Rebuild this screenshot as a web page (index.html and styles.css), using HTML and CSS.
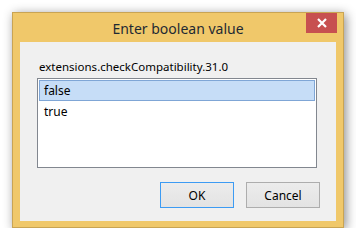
FILE: index.html
```html
<!DOCTYPE html>
<html>
<head>
<meta charset="utf-8">
<link rel="stylesheet" href="styles.css">
</head>
<body>
<div class="window">
  <div class="titlebar">
    <span class="title">Enter boolean value</span>
    <div class="close">
      <svg width="10" height="10" viewBox="0 0 10 10"><path d="M1 1 L9 9 M9 1 L1 9" stroke="#fff" stroke-width="2.2" fill="none"/></svg>
    </div>
  </div>
  <div class="client">
    <div class="label">extensions.checkCompatibility.31.0</div>
    <div class="listbox">
      <div class="item selected">false</div>
      <div class="item">true</div>
    </div>
    <div class="buttons">
      <div class="btn default">OK</div>
      <div class="btn">Cancel</div>
    </div>
  </div>
</div>
</body>
</html>
```

FILE: styles.css
```css
html, body { margin: 0; padding: 0; background: #fff; }
body { font-family: "Noto Sans", "Open Sans", sans-serif; }
.window {
  position: relative;
  margin: 12px 0 0 12px;
  width: 330px;
  height: 214px;
  border: 1px solid #c9a453;
  background: #f0c86a;
  box-shadow: 2px 2px 10px rgba(0,0,0,0.45);
  display: flex;
  flex-direction: column;
}
.titlebar {
  height: 29px;
  display: flex;
  align-items: center;
  justify-content: center;
}
.title {
  font-size: 14px;
  color: #1f2a33;
  margin-top: 1px;
}
.close {
  position: absolute;
  top: 0;
  right: 6px;
  width: 31px;
  height: 20px;
  background: #c75050;
  display: flex;
  align-items: center;
  justify-content: center;
}
.close svg { display: block; }
.client {
  margin: 0 7px 6px 7px;
  flex: 1;
  background: #f0f0f0;
  display: flex;
  flex-direction: column;
  font-size: 12px;
  color: #000;
}
.label {
  margin: 16px 0 0 19px;
  height: 17px;
  line-height: 17px;
  font-size: 11.5px;
}
.listbox {
  margin: 3px 0 0 17px;
  width: 276px;
  height: 86px;
  border: 1px solid #82878f;
  background: #fff;
  padding: 1px;
  box-sizing: content-box;
}
.item {
  height: 21px;
  line-height: 19px;
  padding-left: 4px;
  border: 1px solid transparent;
  box-sizing: border-box;
}
.item.selected {
  background: #c6ddf7;
  border-color: #7fa6d6;
}
.buttons {
  display: flex;
  justify-content: flex-end;
  gap: 12px;
  margin: 14px 16px 0 0;
}
.btn {
  width: 74px;
  height: 26px;
  box-sizing: border-box;
  border: 1px solid #adadad;
  background: linear-gradient(#ececec, #e3e3e3);
  display: flex;
  align-items: center;
  justify-content: center;
  font-size: 12px;
}
.btn.default { border-color: #3c9bf3; }
```
